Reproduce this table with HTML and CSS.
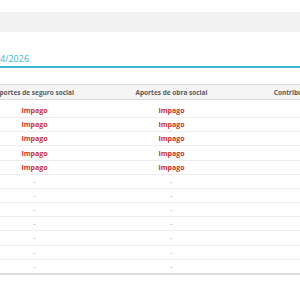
FILE: index.html
```html
<!DOCTYPE html>
<html lang="es">
<head>
    <meta charset="UTF-8">
    <meta name="viewport" content="width=device-width, initial-scale=1.0">
    <title>Estado de aportes</title>
    <link rel="stylesheet" href="styles.css">
</head>
<body>
    <!-- barra superior -->
    <div class="top-bar"></div>

    <!-- período -->
    <div class="period">
        <span class="period-text">4/2026</span>
    </div>

    <!-- tabla de aportes -->
    <div class="table-wrap">
        <table class="aportes">
            <thead>
                <tr>
                    <th>Aportes de seguro social</th>
                    <th>Aportes de obra social</th>
                    <th>Contribuciones de OS</th>
                </tr>
            </thead>
            <tbody>
                <tr><td class="impago">Impago</td><td class="impago">Impago</td><td></td></tr>
                <tr><td class="impago">Impago</td><td class="impago">Impago</td><td></td></tr>
                <tr><td class="impago">Impago</td><td class="impago">Impago</td><td></td></tr>
                <tr><td class="impago">Impago</td><td class="impago">Impago</td><td></td></tr>
                <tr><td class="impago">Impago</td><td class="impago">Impago</td><td></td></tr>
                <tr><td class="empty">-</td><td class="empty">-</td><td></td></tr>
                <tr><td class="empty">-</td><td class="empty">-</td><td></td></tr>
                <tr><td class="empty">-</td><td class="empty">-</td><td></td></tr>
                <tr><td class="empty">-</td><td class="empty">-</td><td></td></tr>
                <tr><td class="empty">-</td><td class="empty">-</td><td></td></tr>
                <tr><td class="empty">-</td><td class="empty">-</td><td></td></tr>
                <tr><td class="empty">-</td><td class="empty">-</td><td></td></tr>
            </tbody>
        </table>
    </div>
</body>
</html>
```

FILE: styles.css
```css
:root {
    --teal: #3bb4cf;
    --red: #c9302c;
    --line: #dcdcdc;
    --row-line: #ededed;
    --head-bg: #f5f5f5;
}

body {
    margin: 0;
    font-family: 'Open Sans', 'Liberation Sans', sans-serif;
    background: #fff;
    color: #555;
    overflow: hidden;
}

/* barra superior */
.top-bar {
    height: 20px;
    margin-top: 12px;
    background: #f2f2f2;
}

/* período */
.period {
    margin-top: 21px;
    height: 13px;
    border-bottom: 2px solid var(--teal);
}

.period-text {
    display: block;
    font-size: 9px;
    line-height: 12px;
    color: var(--teal);
}

/* tabla */
.table-wrap {
    margin-top: 16px;
    overflow: hidden;
}

.aportes {
    border-collapse: collapse;
    table-layout: fixed;
    width: 411px;
    margin-left: -34px;
    font-size: 7px;
}

.aportes th {
    height: 14px;
    padding: 0;
    background: var(--head-bg);
    border-top: 1px solid var(--line);
    border-bottom: 1px solid var(--line);
    font-size: 6.5px;
    font-weight: 700;
    color: #5a5a5a;
    text-align: center;
    white-space: nowrap;
}

.aportes td {
    height: 13.17px;
    padding: 0;
    border-bottom: 1px solid var(--row-line);
    text-align: center;
    line-height: 13px;
}

.aportes tbody tr:first-child td {
    padding-top: 4px;
}

.aportes tbody tr:last-child td {
    border-bottom: 2px solid var(--line);
}

.impago {
    color: var(--red);
    font-weight: 700;
}

.empty {
    color: #999;
}
```
